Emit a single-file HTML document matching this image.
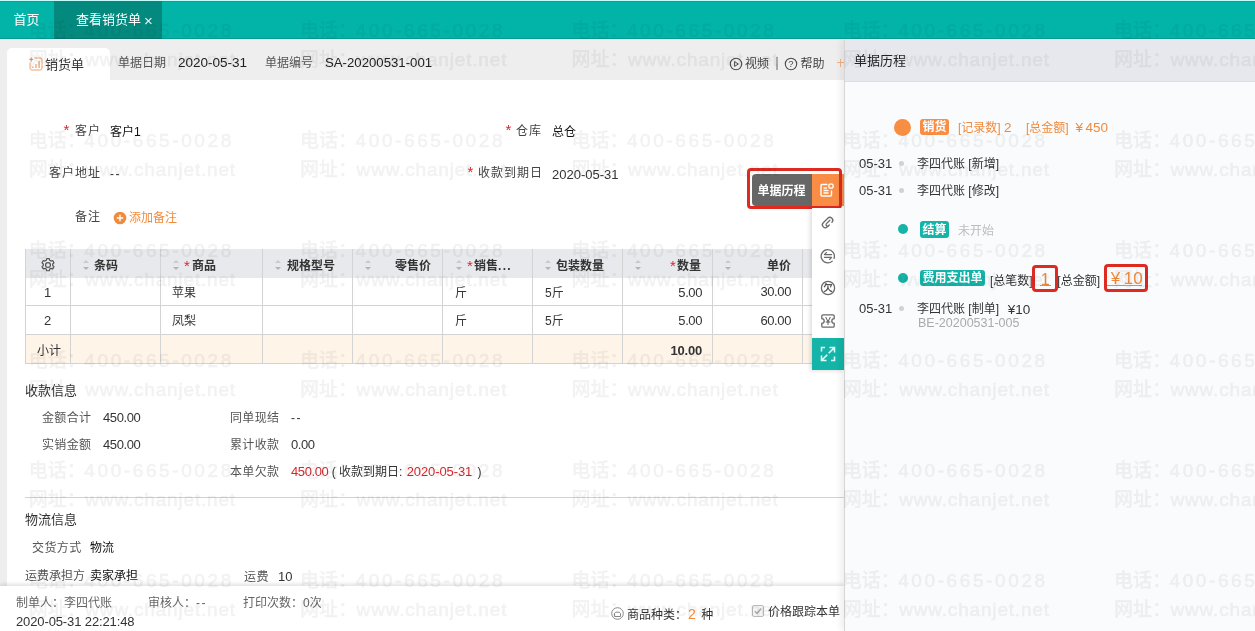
<!DOCTYPE html>
<html lang="zh-CN">
<head>
<meta charset="utf-8">
<title>查看销货单</title>
<style>
*{box-sizing:border-box;margin:0;padding:0}
html,body{width:1255px;height:631px;overflow:hidden;background:#eeeeee}
body{position:relative;font-family:"Liberation Sans","Noto Sans CJK SC",sans-serif;font-size:12px;color:#333}
.t{position:absolute;white-space:nowrap;line-height:20px;height:20px;margin-top:1px}
.lb{letter-spacing:1px;color:#444}
.n{font-size:12.5px}
.abs{position:absolute}
.red{color:#d9262b}
.org{color:#f08a3c}
/* top bar */
#top{position:absolute;left:0;top:0;width:1255px;height:39px;background:#02b4a8;z-index:5}
#top .hl{position:absolute;left:0;top:0;width:100%;height:1px;background:#c4fbfa}
#top .hl2{position:absolute;left:0;top:1px;width:100%;height:1px;background:#1a9a90}
#top .act{position:absolute;left:54px;top:1px;width:108px;height:38px;background:#04897f}
#top .t{color:#fff;font-size:13px;margin-top:0}
/* sub bar */
#sub{position:absolute;left:0;top:39px;width:845px;height:41px;background:#eeeeee}
#sub .tab{position:absolute;left:7px;top:9px;width:103px;height:32px;background:#fff;border-radius:5px 5px 0 0}
/* main panel */
#main{position:absolute;left:7px;top:80px;width:838px;height:551px;background:#fff}
/* right panel */
#right{position:absolute;left:845px;top:39px;width:410px;height:592px;background:#fafbfc;box-shadow:-1px 0 0 #d6d6d6,-4px 0 7px rgba(0,0,0,.07)}
#right .hd{position:absolute;left:0;top:0;width:100%;height:43px;background:#e6e8ed;border-bottom:1px solid #dcdee2}

#grid{position:absolute;left:18px;top:169px;width:788px;height:115px}
#grid .gh{position:absolute;left:0;top:0;width:100%;height:29px;background:#e7e9ec}
#grid .gr{position:absolute;left:0;width:100%;height:28px;border-bottom:1px solid #d3d3d3}
#grid .gr.sum{background:#fef4e8}
#grid i{position:absolute;top:0;width:1px;height:115px;background:#d3d3d3;display:block}
#grid .hb{font-weight:bold;top:6px;color:#333}
#grid .hb.red{color:#d9262b}
#grid .so{position:absolute;top:11px;width:0;height:0;margin-left:1px}
#grid .so:before{content:"";position:absolute;left:0;top:0;border:3.200px solid transparent;border-bottom:3.700px solid #cacaca;border-top:0;margin-left:-.2px;margin-top:-.2px}
#grid .so:after{content:"";position:absolute;left:0;top:6.800px;border:3.200px solid transparent;border-top:3.700px solid #b4b4b4;border-bottom:0;margin-left:-.2px}
#foot{position:absolute;left:0;top:586px;width:845px;height:45px;background:#fff;box-shadow:0 -2px 4px rgba(0,0,0,.12)}
#tb{position:absolute;left:812px;top:208px;width:33px;height:162px;background:#fff;box-shadow:-2px 1px 4px rgba(0,0,0,.13)}
.tag{position:absolute;height:17px;line-height:18.500px;overflow:hidden;color:#fff;font-weight:bold;font-size:12px;text-align:center;border-radius:3px;white-space:nowrap}
.dot{position:absolute;width:5px;height:5px;border-radius:3px;background:#d2d2d2}
.tdot{position:absolute;width:9.600px;height:9.600px;border-radius:5px;background:#14b4a8}
.rbox{position:absolute;border:3px solid #de2a20;border-radius:4px}

#wm{position:absolute;left:0;top:0;width:1255px;height:631px;overflow:hidden;pointer-events:none;z-index:50;mix-blend-mode:multiply}
#wm .w{position:absolute;white-space:nowrap;font-size:19px;line-height:28px;height:28px;color:#f2f2f2}
#wm b{font-weight:500;-webkit-text-stroke:.25px #f2f2f2;position:absolute;left:0;top:0}
#wm u{text-decoration:none;position:absolute;left:55.500px;top:0;letter-spacing:2.600px;-webkit-text-stroke:.55px #f2f2f2}
#wm u.u2{letter-spacing:.82px;left:56.500px}
</style>
</head>
<body>
<div id="top"><div class="hl"></div><div class="hl2"></div><div class="act"></div><div class="abs" style="left:0;top:38px;width:100%;height:1px;background:rgba(0,0,0,.14)"></div><div class="abs" style="left:0;top:39px;width:100%;height:1px;background:#d2fbf9"></div>
<div class="t" style="left:13.500px;top:10px">首页</div>
<div class="t" style="left:76px;top:10px">查看销货单</div>
<div class="t" style="left:144px;top:11px;font-size:15px;opacity:.9">×</div>
</div>

<div id="sub"><div class="tab"></div>
<svg class="abs" style="left:29px;top:18px" width="14" height="14" viewBox="0 0 14 14"><path d="M5.500 1H10.700a2.300 2.300 0 0 1 2.300 2.300v7.400a2.300 2.300 0 0 1-2.300 2.300H3.300A2.300 2.300 0 0 1 1 10.700V5.500" stroke="#f6c09a" stroke-width="1.400" fill="none"/><path d="M3.900 11V9.600M7 11V7M10.100 11V3.800" stroke="#f3ae80" stroke-width="1.500" fill="none"/><path d="M2.300 .4v4M.3 2.400h4" stroke="#f0945a" stroke-width="1.100" fill="none"/></svg>
<div class="t" style="left:45px;top:14.500px;font-size:13px;color:#333">销货单</div>
<div class="t" style="left:118px;top:13px;color:#555">单据日期</div>
<div class="t" style="left:178px;top:13px;font-size:13.500px;color:#222">2020-05-31</div>
<div class="t" style="left:265px;top:13px;color:#555">单据编号</div>
<div class="t" style="left:325px;top:13px;font-size:13.200px;color:#222">SA-20200531-001</div>
<svg class="abs" style="left:728.500px;top:17.500px" width="14" height="14" viewBox="0 0 14 14"><circle cx="7" cy="7" r="5.700" fill="none" stroke="#4a4a4a" stroke-width="1.100"/><path d="M5.600 4.600l3.700 2.400-3.700 2.400z" fill="none" stroke="#4a4a4a" stroke-width="1" stroke-linejoin="round"/></svg>
<div class="t" style="left:745px;top:14px;color:#444">视频</div>
<div class="abs" style="left:776px;top:18px;width:2px;height:13px;background:#a9a9a9"></div>
<svg class="abs" style="left:784px;top:17.500px" width="14" height="14" viewBox="0 0 14 14"><circle cx="7" cy="7" r="5.700" fill="none" stroke="#4a4a4a" stroke-width="1.100"/><text x="7" y="10.300" font-size="9.500" text-anchor="middle" fill="#4a4a4a" font-family="Liberation Sans, sans-serif">?</text></svg>
<div class="t" style="left:800.500px;top:14px;color:#444">帮助</div>
<div class="abs" style="left:837px;top:23px;width:8px;height:1px;background:#f5b080"></div>
<div class="abs" style="left:840px;top:20px;width:1px;height:8px;background:#f5b080"></div>
</div>

<div id="main">
<!-- form -->
<div class="t red" style="left:56.5px;top:39px;font-size:15px">*</div>
<div class="t lb" style="left:68px;top:40px">客户</div>
<div class="t" style="left:103px;top:41px;color:#111">客户1</div>
<div class="t lb" style="left:42px;top:82px">客户地址</div>
<div class="t" style="left:103px;top:83px;letter-spacing:1.500px">--</div>
<div class="t red" style="left:498.5px;top:39px;font-size:15px">*</div>
<div class="t lb" style="left:509px;top:40px">仓库</div>
<div class="t" style="left:545px;top:41px;color:#111">总仓</div>
<div class="t red" style="left:460.5px;top:81px;font-size:15px">*</div>
<div class="t lb" style="left:471px;top:82px">收款到期日</div>
<div class="t" style="left:545px;top:84px;font-size:13px">2020-05-31</div>
<div class="t lb" style="left:68px;top:126px">备注</div>
<svg class="abs" style="left:106px;top:131px" width="14" height="14" viewBox="0 0 14 14"><circle cx="7" cy="7" r="6.300" fill="#f08a3c"/><path d="M7 3.800v6.400M3.800 7h6.400" stroke="#fff" stroke-width="1.400"/></svg>
<div class="t org" style="left:122px;top:127px">添加备注</div>

<!-- table -->
<div id="grid">
<div class="gh"></div>
<div class="gr" style="top:29px"></div>
<div class="gr" style="top:57px;height:29px"></div>
<div class="gr sum" style="top:86px;height:29px"></div>
<i style="left:0"></i><i style="left:45px"></i><i style="left:135px"></i><i style="left:237px"></i><i style="left:327px"></i><i style="left:417px"></i><i style="left:507px"></i><i style="left:597px"></i><i style="left:687px"></i><i style="left:777px"></i>
<svg class="abs" style="left:15px;top:7.500px" width="16" height="16" viewBox="0 0 15 15"><circle cx="7.500" cy="7.500" r="2.300" fill="none" stroke="#555" stroke-width="1.150"/><path d="M6.300 1.500h2.400l.4 1.600 1.200.7 1.600-.5 1.200 2.100-1.200 1.100v1.400l1.200 1.100-1.200 2.100-1.600-.5-1.200.7-.4 1.600H6.300l-.4-1.600-1.200-.7-1.600.5-1.200-2.100 1.200-1.100V6.500L1.900 5.400l1.200-2.100 1.600.5 1.200-.7z" fill="none" stroke="#555" stroke-width="1.150" stroke-linejoin="round"/></svg>
<span class="so" style="left:57px"></span><div class="t hb" style="left:69px">条码</div>
<span class="so" style="left:147px"></span><div class="t hb red" style="left:159px;font-weight:normal;top:6px;font-size:15px;margin-left:0">*</div><div class="t hb" style="left:167px">商品</div>
<span class="so" style="left:249px"></span><div class="t hb" style="left:262px">规格型号</div>
<span class="so" style="left:339px"></span><div class="t hb" style="left:370px">零售价</div>
<span class="so" style="left:430px"></span><div class="t hb red" style="left:442px;font-weight:normal;top:6px;font-size:15px;margin-left:0">*</div><div class="t hb" style="left:449px">销售<span style="letter-spacing:1.300px">...</span></div>
<span class="so" style="left:519px"></span><div class="t hb" style="left:531px">包装数量</div>
<span class="so" style="left:609px"></span><div class="t hb red" style="left:645px;font-weight:normal;top:6px;font-size:15px;margin-left:0">*</div><div class="t hb" style="left:652px">数量</div>
<span class="so" style="left:699px"></span><div class="t hb" style="left:742px">单价</div>

<div class="t" style="left:19px;top:33px;font-size:13px">1</div>
<div class="t" style="left:147px;top:33px">苹果</div>
<div class="t" style="left:430px;top:33px">斤</div>
<div class="t" style="left:520px;top:33px">5斤</div>
<div class="t" style="right:111px;top:33px;font-size:13px;letter-spacing:-.4px">5.00</div>
<div class="t" style="right:22px;top:32px;font-size:13px;letter-spacing:-.4px">30.00</div>
<div class="t" style="left:19px;top:61px;font-size:13px">2</div>
<div class="t" style="left:147px;top:61px">凤梨</div>
<div class="t" style="left:430px;top:61px">斤</div>
<div class="t" style="left:520px;top:61px">5斤</div>
<div class="t" style="right:111px;top:61px;font-size:13px;letter-spacing:-.4px">5.00</div>
<div class="t" style="right:22px;top:60.500px;font-size:13px;letter-spacing:-.4px">60.00</div>
<div class="t" style="left:12px;top:91px">小计</div>
<div class="t" style="right:111px;top:91px;font-size:13px;font-weight:bold;letter-spacing:-.2px">10.00</div>
</div>

<!-- payment -->
<div class="t" style="left:18px;top:300px;font-size:13px">收款信息</div>
<div class="t lb" style="left:35px;top:327px;letter-spacing:.35px;color:#555">金额合计</div><div class="t" style="left:96px;top:327px;font-size:13px;letter-spacing:-.4px">450.00</div>
<div class="t lb" style="left:35px;top:354px;letter-spacing:.35px;color:#555">实销金额</div><div class="t" style="left:96px;top:354px;font-size:13px;letter-spacing:-.4px">450.00</div>
<div class="t lb" style="left:223px;top:327px;letter-spacing:.35px;color:#555">同单现结</div><div class="t" style="left:284px;top:327px;letter-spacing:1.500px">--</div>
<div class="t lb" style="left:223px;top:354px;letter-spacing:.35px;color:#555">累计收款</div><div class="t" style="left:284px;top:354px;font-size:13px;letter-spacing:-.4px">0.00</div>
<div class="t lb" style="left:223px;top:381px;letter-spacing:.35px;color:#555">本单欠款</div><div class="t" style="left:284px;top:381px;font-size:12px"><span class="red" style="font-size:13px;letter-spacing:-.4px">450.00</span> ( 收款到期日: <span class="red" style="font-size:13px;letter-spacing:-.1px;margin:0 2px 0 1px">2020-05-31</span> )</div>
<div class="abs" style="left:18px;top:417px;width:820px;height:1px;background:#d2d2d2"></div>
<div class="t" style="left:18px;top:429px;font-size:13px">物流信息</div>
<div class="t lb" style="left:25px;top:457px;letter-spacing:.4px;color:#555">交货方式</div><div class="t" style="left:83px;top:457px;color:#111">物流</div>
<div class="t" style="left:18px;top:485px;color:#555">运费承担方</div><div class="t" style="left:83px;top:485px;color:#111">卖家承担</div>
<div class="t lb" style="left:237px;top:486px;letter-spacing:.4px;color:#555">运费</div><div class="t" style="left:271px;top:486px;font-size:13px">10</div>
</div>

<!-- footer -->
<div id="foot">
<div class="t" style="left:16px;top:6px;color:#666">制单人：李四代账</div>
<div class="t" style="left:148px;top:6px;color:#666">审核人：<span style="letter-spacing:1.500px">--</span></div>
<div class="t" style="left:243px;top:6px;color:#666">打印次数：0次</div>
<div class="t" style="left:16px;top:25px;font-size:13px;letter-spacing:-.12px;margin-top:.5px">2020-05-31 22:21:48</div>
<svg class="abs" style="left:611px;top:21px" width="13" height="13" viewBox="0 0 13 13"><circle cx="6.500" cy="6.500" r="5.800" fill="none" stroke="#888" stroke-width="1"/><path d="M3.500 9.500v-3l1.200-1.300h3.600l1.200 1.300v3z" fill="none" stroke="#888" stroke-width="1"/></svg>
<div class="t" style="left:627px;top:17px">商品种类：<span class="org" style="font-size:14px;margin:0 2px 0 1px">2</span> 种</div>
<div class="abs" style="left:752px;top:19px;width:12px;height:12px;border:1px solid #bbb;border-radius:2px;background:#f3f3f3"></div>
<svg class="abs" style="left:753px;top:20px" width="10" height="10" viewBox="0 0 10 10"><path d="M1.800 5.200l2.200 2.200 4.200-5" fill="none" stroke="#aaa" stroke-width="1.500"/></svg>
<div class="t" style="left:768px;top:15px">价格跟踪本单</div>
</div>

<!-- history button -->
<div class="abs" style="left:752px;top:174px;width:60px;height:32px;background:#666;border-radius:4px 0 0 4px"></div>
<div class="t" style="left:757.500px;top:179.500px;color:#fff;font-weight:bold;font-size:12px">单据历程</div>
<div class="abs" style="left:812px;top:174px;width:33px;height:32px;background:#f98d45"></div>
<svg class="abs" style="left:819px;top:182px" width="16" height="16" viewBox="0 0 16 16"><path d="M8.500 2.500H3a1 1 0 0 0-1 1v9.500a1 1 0 0 0 1 1h8.500a1 1 0 0 0 1-1V8.500" fill="none" stroke="#fff" stroke-width="1.400"/><path d="M4.500 6h3.500M4.500 8.500h5M4.500 11h5" stroke="#fff" stroke-width="1.300" fill="none"/><circle cx="12" cy="4" r="2.200" fill="none" stroke="#fff" stroke-width="1.300"/></svg>
<div class="abs" style="left:747px;top:168px;width:95px;height:41px;border:3px solid #de2a20;border-radius:4px"></div>

<!-- side toolbar -->
<div id="tb">
<svg class="abs" style="left:8px;top:7px" width="16" height="16" viewBox="0 0 16 16"><g transform="rotate(-45 8 8)" fill="none" stroke="#6a6a6a" stroke-width="1.300" stroke-linecap="round"><path d="M5.500 10.300H4.800a2.900 2.900 0 0 1 0-5.800h6.400a2.900 2.900 0 0 1 0 5.800"/><path d="M11.200 7.400H6.500a1.450 1.450 0 0 0 0 2.900h1"/></g></svg>
<svg class="abs" style="left:8px;top:40px" width="16" height="16" viewBox="0 0 16 16"><path d="M12.300 13.100A6.600 6.600 0 1 1 14 10.500" fill="none" stroke="#6a6a6a" stroke-width="1.300" stroke-linecap="round"/><path d="M6.300 4.600L4.500 6.600h7M11.500 9.400h-7M9.700 11.400l1.800-2" fill="none" stroke="#6a6a6a" stroke-width="1.300" stroke-linecap="round" stroke-linejoin="round"/></svg>
<svg class="abs" style="left:8px;top:72px" width="16" height="16" viewBox="0 0 16 16"><circle cx="8" cy="8" r="6.600" fill="none" stroke="#6a6a6a" stroke-width="1.300"/><text x="8" y="11.400" font-size="9.500" text-anchor="middle" fill="#555" font-family="Liberation Sans, Noto Sans CJK SC, sans-serif" font-weight="bold">欠</text></svg>
<svg class="abs" style="left:8px;top:105px" width="16" height="16" viewBox="0 0 16 16"><path d="M3 1.800h10a1.200 1.200 0 0 1 1.200 1.200v2.600a2.400 2.400 0 0 0 0 4.800v2.600a1.200 1.200 0 0 1-1.200 1.200H3a1.200 1.200 0 0 1-1.200-1.200v-2.600a2.400 2.400 0 0 0 0-4.800V3A1.200 1.200 0 0 1 3 1.800z" fill="none" stroke="#6a6a6a" stroke-width="1.300"/><text x="8" y="11.600" font-size="10" text-anchor="middle" fill="#555" font-family="Liberation Sans, sans-serif">¥</text></svg>
<div class="abs" style="left:0;top:130px;width:32px;height:32px;background:#14b4a8"></div>
<svg class="abs" style="left:8px;top:138px" width="16" height="16" viewBox="0 0 16 16"><path d="M5 1.500H1.500v4M11 14.500h3.500v-4" fill="none" stroke="#dcfffb" stroke-width="1.600"/><path d="M9.500 1.500h5v5M14.500 1.500L8.700 7.300M6.500 14.500h-5v-5M1.500 14.500l5.800-5.800" fill="none" stroke="#dcfffb" stroke-width="1.600"/></svg>
</div>

<div id="right"><div class="hd"></div>
<div class="t" style="left:9px;top:11px;font-size:13px;color:#222">单据历程</div>
<div class="abs" style="left:49px;top:80px;width:17px;height:17px;border-radius:9px;background:#f88d44"></div>
<div class="tag" style="left:75px;top:80px;width:29px;height:16px;line-height:17.500px;background:#f88d44">销货</div>
<div class="t org" style="left:113px;top:78px">[记录数] <span style="font-size:13.500px">2</span></div>
<div class="t org" style="left:181px;top:78px">[总金额]</div><div class="t org" style="left:230.500px;top:78px;font-size:13.500px">¥<span style="margin-left:2.500px">450</span></div>
<div class="t" style="left:14px;top:114px;font-size:13px">05-31</div><div class="dot" style="left:54px;top:122px"></div><div class="t" style="left:72px;top:114px">李四代账 [新增]</div>
<div class="t" style="left:14px;top:141px;font-size:13px">05-31</div><div class="dot" style="left:54px;top:149px"></div><div class="t" style="left:72px;top:141px">李四代账 [修改]</div>
<div class="tdot" style="left:53px;top:185px"></div>
<div class="tag" style="left:75px;top:182px;width:29px;background:#14b4a8">结算</div>
<div class="t" style="left:113px;top:180.500px;color:#bcbcbc">未开始</div>
<div class="tdot" style="left:53px;top:234px"></div>
<div class="tag" style="left:75px;top:231px;width:65px;height:16px;line-height:17.500px;background:#14b4a8">费用支出单</div>
<div class="t" style="left:145px;top:230.600px">[总笔数]</div>
<div class="rbox" style="left:187px;top:226px;width:26px;height:27px"></div>
<div class="t org" style="left:195.700px;top:229.500px;font-size:16px">1</div>
<div class="abs" style="left:195px;top:246px;width:11px;height:1px;background:#f08a3c"></div>
<div class="t" style="left:212.300px;top:230.600px">[总金额]</div>
<div class="rbox" style="left:259px;top:225px;width:44px;height:28px"></div>
<div class="t org" style="left:265.700px;top:228.700px;font-size:17px">¥</div><div class="t org" style="left:278.700px;top:228.700px;font-size:17px">10</div>
<div class="abs" style="left:262px;top:246px;width:35px;height:1px;background:#f08a3c"></div>
<div class="t" style="left:14px;top:259px;font-size:13px">05-31</div><div class="dot" style="left:54px;top:267px"></div><div class="t" style="left:72px;top:259px">李四代账 [制单]</div><div class="t" style="left:162.700px;top:259.700px;font-size:13.500px">¥10</div>
<div class="t" style="left:73px;top:273px;color:#aaa;font-size:12.500px">BE-20200531-005</div>
</div>

<div id="wm">
<div class="w" style="left:28.8px;top:16.5px"><b>电话：</b><u>400-665-0028</u></div>
<div class="w" style="left:28.8px;top:45.5px"><b>网址：</b><u class="u2">www.chanjet.net</u></div>
<div class="w" style="left:300.1px;top:16.5px"><b>电话：</b><u>400-665-0028</u></div>
<div class="w" style="left:300.1px;top:45.5px"><b>网址：</b><u class="u2">www.chanjet.net</u></div>
<div class="w" style="left:571.4px;top:16.5px"><b>电话：</b><u>400-665-0028</u></div>
<div class="w" style="left:571.4px;top:45.5px"><b>网址：</b><u class="u2">www.chanjet.net</u></div>
<div class="w" style="left:842.7px;top:16.5px"><b>电话：</b><u>400-665-0028</u></div>
<div class="w" style="left:842.7px;top:45.5px"><b>网址：</b><u class="u2">www.chanjet.net</u></div>
<div class="w" style="left:1114.0px;top:16.5px"><b>电话：</b><u>400-665-0028</u></div>
<div class="w" style="left:1114.0px;top:45.5px"><b>网址：</b><u class="u2">www.chanjet.net</u></div>
<div class="w" style="left:28.8px;top:126.5px"><b>电话：</b><u>400-665-0028</u></div>
<div class="w" style="left:28.8px;top:155.5px"><b>网址：</b><u class="u2">www.chanjet.net</u></div>
<div class="w" style="left:300.1px;top:126.5px"><b>电话：</b><u>400-665-0028</u></div>
<div class="w" style="left:300.1px;top:155.5px"><b>网址：</b><u class="u2">www.chanjet.net</u></div>
<div class="w" style="left:571.4px;top:126.5px"><b>电话：</b><u>400-665-0028</u></div>
<div class="w" style="left:571.4px;top:155.5px"><b>网址：</b><u class="u2">www.chanjet.net</u></div>
<div class="w" style="left:842.7px;top:126.5px"><b>电话：</b><u>400-665-0028</u></div>
<div class="w" style="left:842.7px;top:155.5px"><b>网址：</b><u class="u2">www.chanjet.net</u></div>
<div class="w" style="left:1114.0px;top:126.5px"><b>电话：</b><u>400-665-0028</u></div>
<div class="w" style="left:1114.0px;top:155.5px"><b>网址：</b><u class="u2">www.chanjet.net</u></div>
<div class="w" style="left:28.8px;top:236.5px"><b>电话：</b><u>400-665-0028</u></div>
<div class="w" style="left:28.8px;top:265.5px"><b>网址：</b><u class="u2">www.chanjet.net</u></div>
<div class="w" style="left:300.1px;top:236.5px"><b>电话：</b><u>400-665-0028</u></div>
<div class="w" style="left:300.1px;top:265.5px"><b>网址：</b><u class="u2">www.chanjet.net</u></div>
<div class="w" style="left:571.4px;top:236.5px"><b>电话：</b><u>400-665-0028</u></div>
<div class="w" style="left:571.4px;top:265.5px"><b>网址：</b><u class="u2">www.chanjet.net</u></div>
<div class="w" style="left:842.7px;top:236.5px"><b>电话：</b><u>400-665-0028</u></div>
<div class="w" style="left:842.7px;top:265.5px"><b>网址：</b><u class="u2">www.chanjet.net</u></div>
<div class="w" style="left:1114.0px;top:236.5px"><b>电话：</b><u>400-665-0028</u></div>
<div class="w" style="left:1114.0px;top:265.5px"><b>网址：</b><u class="u2">www.chanjet.net</u></div>
<div class="w" style="left:28.8px;top:346.5px"><b>电话：</b><u>400-665-0028</u></div>
<div class="w" style="left:28.8px;top:375.5px"><b>网址：</b><u class="u2">www.chanjet.net</u></div>
<div class="w" style="left:300.1px;top:346.5px"><b>电话：</b><u>400-665-0028</u></div>
<div class="w" style="left:300.1px;top:375.5px"><b>网址：</b><u class="u2">www.chanjet.net</u></div>
<div class="w" style="left:571.4px;top:346.5px"><b>电话：</b><u>400-665-0028</u></div>
<div class="w" style="left:571.4px;top:375.5px"><b>网址：</b><u class="u2">www.chanjet.net</u></div>
<div class="w" style="left:842.7px;top:346.5px"><b>电话：</b><u>400-665-0028</u></div>
<div class="w" style="left:842.7px;top:375.5px"><b>网址：</b><u class="u2">www.chanjet.net</u></div>
<div class="w" style="left:1114.0px;top:346.5px"><b>电话：</b><u>400-665-0028</u></div>
<div class="w" style="left:1114.0px;top:375.5px"><b>网址：</b><u class="u2">www.chanjet.net</u></div>
<div class="w" style="left:28.8px;top:456.5px"><b>电话：</b><u>400-665-0028</u></div>
<div class="w" style="left:28.8px;top:485.5px"><b>网址：</b><u class="u2">www.chanjet.net</u></div>
<div class="w" style="left:300.1px;top:456.5px"><b>电话：</b><u>400-665-0028</u></div>
<div class="w" style="left:300.1px;top:485.5px"><b>网址：</b><u class="u2">www.chanjet.net</u></div>
<div class="w" style="left:571.4px;top:456.5px"><b>电话：</b><u>400-665-0028</u></div>
<div class="w" style="left:571.4px;top:485.5px"><b>网址：</b><u class="u2">www.chanjet.net</u></div>
<div class="w" style="left:842.7px;top:456.5px"><b>电话：</b><u>400-665-0028</u></div>
<div class="w" style="left:842.7px;top:485.5px"><b>网址：</b><u class="u2">www.chanjet.net</u></div>
<div class="w" style="left:1114.0px;top:456.5px"><b>电话：</b><u>400-665-0028</u></div>
<div class="w" style="left:1114.0px;top:485.5px"><b>网址：</b><u class="u2">www.chanjet.net</u></div>
<div class="w" style="left:28.8px;top:566.5px"><b>电话：</b><u>400-665-0028</u></div>
<div class="w" style="left:28.8px;top:595.5px"><b>网址：</b><u class="u2">www.chanjet.net</u></div>
<div class="w" style="left:300.1px;top:566.5px"><b>电话：</b><u>400-665-0028</u></div>
<div class="w" style="left:300.1px;top:595.5px"><b>网址：</b><u class="u2">www.chanjet.net</u></div>
<div class="w" style="left:571.4px;top:566.5px"><b>电话：</b><u>400-665-0028</u></div>
<div class="w" style="left:571.4px;top:595.5px"><b>网址：</b><u class="u2">www.chanjet.net</u></div>
<div class="w" style="left:842.7px;top:566.5px"><b>电话：</b><u>400-665-0028</u></div>
<div class="w" style="left:842.7px;top:595.5px"><b>网址：</b><u class="u2">www.chanjet.net</u></div>
<div class="w" style="left:1114.0px;top:566.5px"><b>电话：</b><u>400-665-0028</u></div>
<div class="w" style="left:1114.0px;top:595.5px"><b>网址：</b><u class="u2">www.chanjet.net</u></div>
</div>
</body>
</html>
